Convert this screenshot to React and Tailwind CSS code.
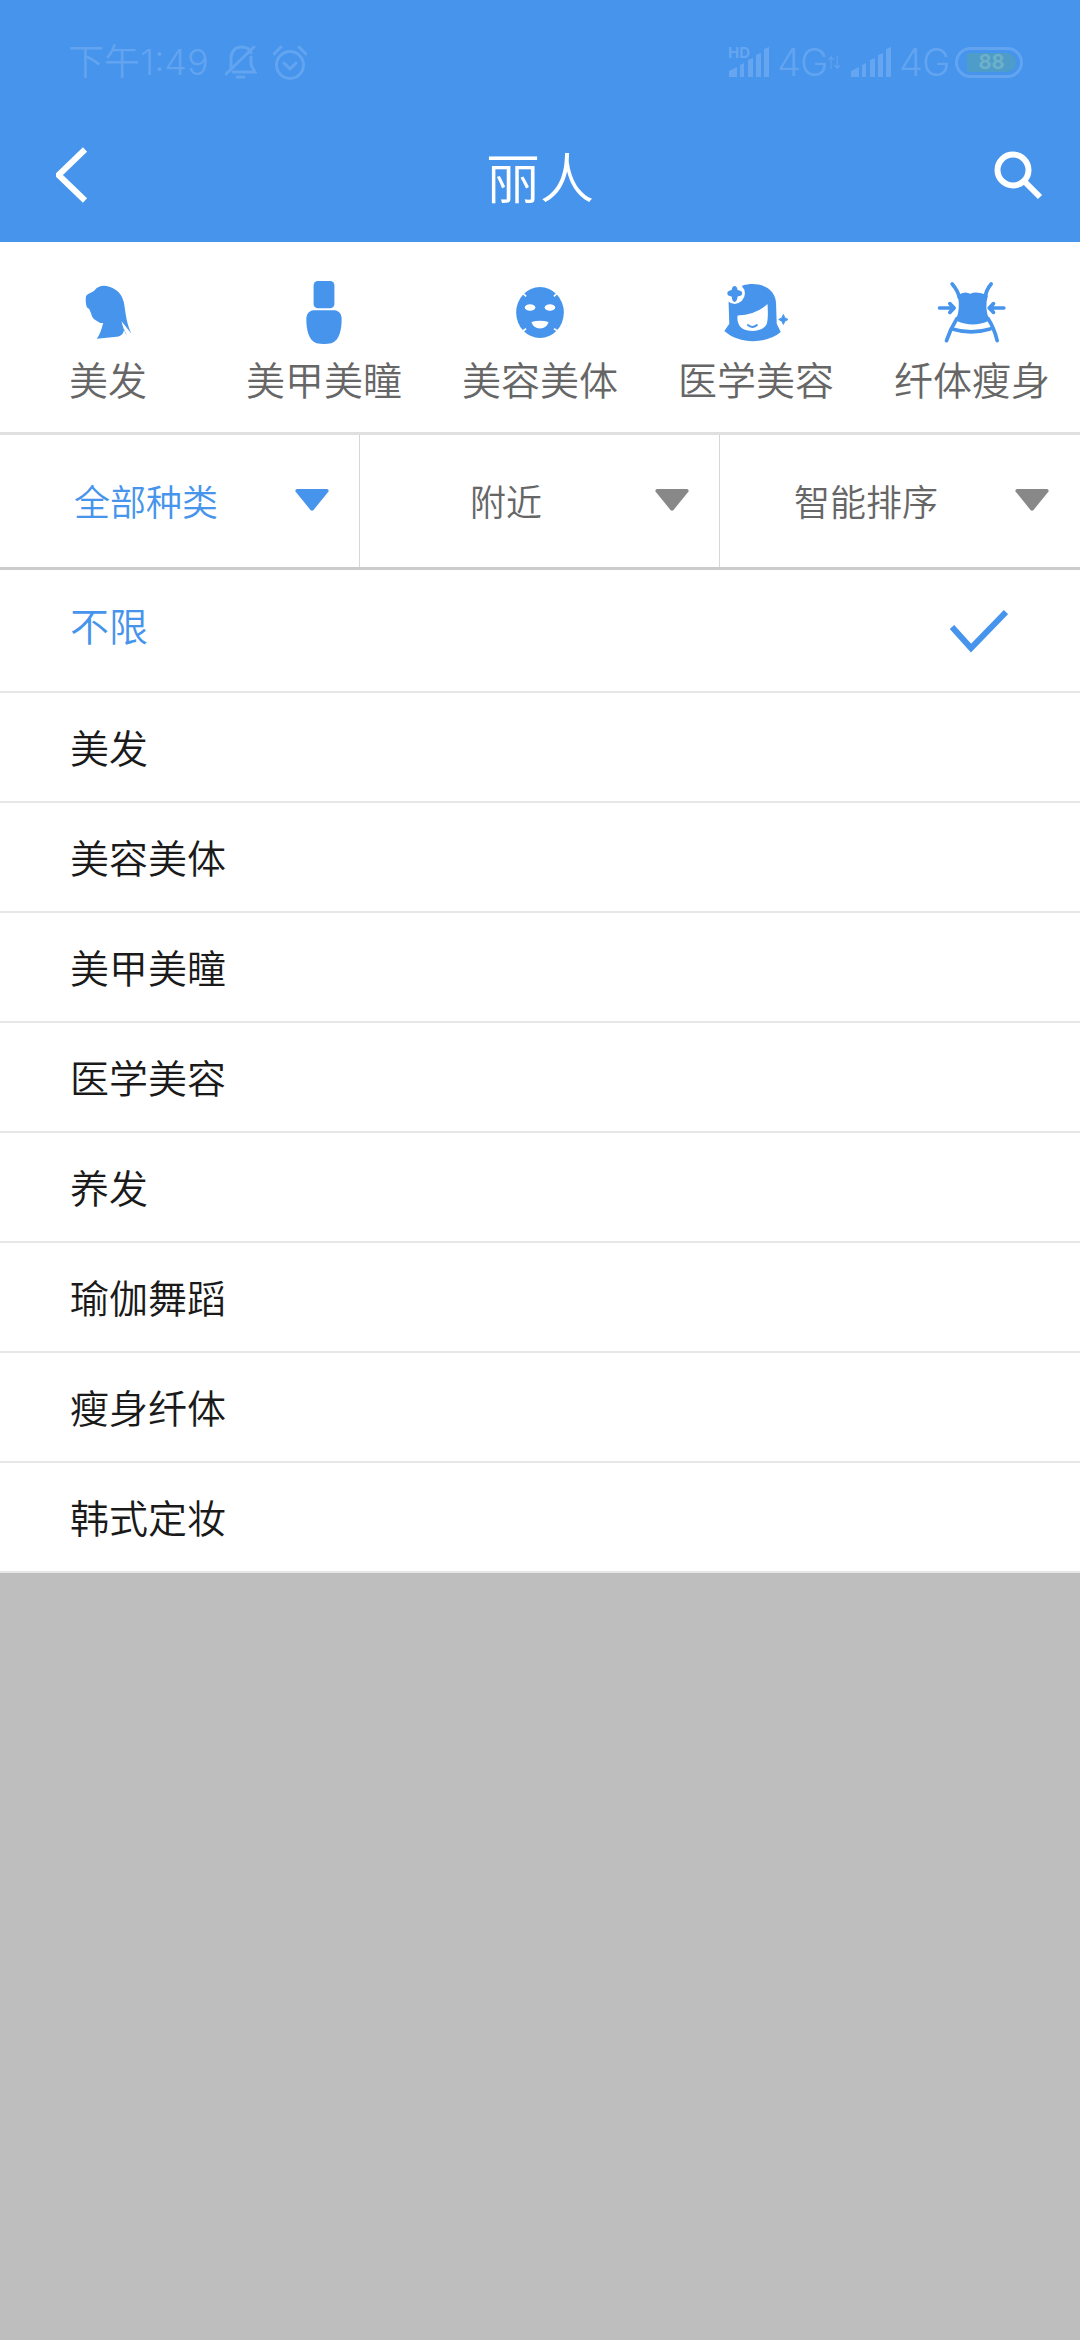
const CATEGORIES = [
  { label: '美发', icon: <HairIcon /> },
  { label: '美甲美瞳', icon: <NailIcon /> },
  { label: '美容美体', icon: <MaskIcon /> },
  { label: '医学美容', icon: <FaceIcon /> },
  { label: '纤体瘦身', icon: <WaistIcon /> },
];

const FILTERS = ['全部种类', '附近', '智能排序'];

const OPTIONS = ['美发', '美容美体', '美甲美瞳', '医学美容', '养发', '瑜伽舞蹈', '瘦身纤体', '韩式定妆'];

function HairIcon() {
  return (
    <svg width="49" height="56" viewBox="70 70 146 168" fill="#4694ec">
      <path d="M75 110C76 100 88 98 100 90C110 76 128 72 145 78C170 86 183 100 189 125C195 160 197 190 212 219L182 182C186 200 192 215 198 226L190 205C188 222 180 228 160 229L108 234C118 222 122 205 127 187L118 187C108 180 100 178 95 170C92 162 88 150 85 145L78 140C75 130 74 120 75 110Z" />
    </svg>
  );
}

function NailIcon() {
  return (
    <svg width="38" height="67" viewBox="735 55 115 200" fill="#4694ec">
      <rect x="761" y="60" width="63" height="82" rx="13" />
      <path d="M760 148H825C838 150 846 160 846 175C846 205 840 240 815 248Q792 253 770 248C745 240 739 205 739 175C739 160 747 150 760 148Z" />
    </svg>
  );
}

function MaskIcon() {
  return (
    <svg width="50" height="53" viewBox="105 75 150 160">
      <ellipse cx="180" cy="155" rx="72" ry="77" fill="#4694ec" />
      <ellipse cx="150" cy="140" rx="16" ry="10" fill="#fff" />
      <ellipse cx="210" cy="140" rx="16" ry="10" fill="#fff" />
      <path d="M154 184Q180 176 206 184Q200 203 180 203Q160 203 154 184Z" fill="#fff" />
      <path d="M124 93L138 106M236 93L222 106M124 214L138 204M236 212L222 204" stroke="#fff" strokeWidth="5" />
    </svg>
  );
}

function FaceIcon() {
  return (
    <svg width="68" height="61" viewBox="525 125 205 182">
      <path d="M617 130C660 130 688 155 688 190L690 250L702 275C660 312 575 312 532 272L547 250L545 190C545 155 575 130 617 130Z" fill="#4694ec" />
      <path d="M572 225Q630 222 662 190C664 210 664 240 660 250C650 278 585 280 575 250C571 240 571 232 572 225Z" fill="#fff" />
      <path d="M603 254Q616 265 630 254" stroke="#4694ec" strokeWidth="6" fill="none" strokeLinecap="round" />
      <circle cx="563" cy="159" r="31" fill="#fff" />
      <path d="M563 136Q570 136 572 148Q586 150 586 158Q586 166 572 168Q570 184 563 184Q556 184 554 168Q541 166 541 158Q541 150 554 148Q556 136 563 136Z" fill="#4694ec" />
      <path d="M710 222Q712 235 724 237Q712 240 710 252Q708 240 696 237Q708 235 710 222Z" fill="#4694ec" stroke="#4694ec" strokeWidth="3" strokeLinejoin="round" />
    </svg>
  );
}

function WaistIcon() {
  return (
    <svg width="72" height="65" viewBox="50 50 215 195" fill="none" stroke="#4694ec" strokeWidth="11" strokeLinecap="round" strokeLinejoin="round">
      <path d="M118 98Q135 84 152 94Q172 84 202 98C196 120 196 145 207 170Q160 192 112 170C122 145 122 120 118 98Z" fill="#4694ec" strokeWidth="5" />
      <path d="M98 62C110 76 117 88 119 102M215 62C203 76 198 88 198 102" />
      <path d="M112 166C98 188 88 210 81 232M206 166C220 188 228 210 233 232" />
      <path d="M98 197Q155 214 212 197" />
      <path d="M60 134H103M91 121L104 134L91 147M253 134H210M222 121L209 134L222 147" />
    </svg>
  );
}

function SignalBars({ hd }) {
  return (
    <div className="relative h-[30px] w-[40px]">
      {hd && <span className="absolute -left-[1px] -top-[2px] text-[15px] leading-none font-bold text-[#66a6f0] font-['Inter',sans-serif]">HD</span>}
      <svg width="40" height="30" viewBox="0 0 40 30" fill="#66a6f0" className="absolute left-0 top-0">
        <path d="M0 30V24L8 20V30ZM11 30V18L15 16V30ZM19 30V13L24 11V30ZM27 30V8L32 6V30ZM35 30V2L40 0V30Z" />
      </svg>
    </div>
  );
}

function StatusBar() {
  return (
    <div className="flex h-[112px] items-center justify-between pl-[68px] pr-[57px] pt-[12px] font-['Inter','Noto_Sans_CJK_SC',sans-serif] text-[#62a4f0]">
      <div className="flex items-center">
        <span className="w-[157px] text-[36px] leading-none">下午1:49</span>
        <svg width="32" height="34" viewBox="0 0 32 34" fill="none" stroke="#62a4f0" strokeWidth="3" strokeLinecap="round">
          <path d="M6 23V13C6 6 11 2 16 2C21 2 25 4 26 8M26 12V20L30 27H8M1 29L29 2M12 32H19" />
        </svg>
        <svg width="34" height="35" viewBox="0 0 34 35" fill="none" stroke="#62a4f0" strokeWidth="3" strokeLinecap="round" strokeLinejoin="round" className="ml-[16px]">
          <circle cx="17" cy="20" r="13.5" />
          <path d="M11 18L17 24L23 18M1 9L8 2M33 9L26 2" />
        </svg>
      </div>
      <div className="flex items-center">
        <SignalBars hd />
        <span className="ml-[8px] w-[48px] text-[38px] leading-none tracking-[-1px]">4G</span>
        <span className="w-[26px] pl-[2px] text-[14px] leading-none text-[#66a6f0]">⇅</span>
        <SignalBars />
        <span className="ml-[8px] w-[48px] text-[38px] leading-none tracking-[-1px]">4G</span>
        <div className="ml-[8px] flex h-[31px] w-[68px] items-center rounded-full border-[3px] border-[#62a4f0] pl-[9px]">
          <div className="flex h-[19px] w-[49px] items-center justify-center rounded-r-full bg-[#4e9cc9] text-[20px] leading-none font-bold text-[#6eb0c8]">
            88
          </div>
        </div>
      </div>
    </div>
  );
}

function NavBar() {
  return (
    <div className="flex h-[130px] items-center justify-between">
      <div className="flex w-[180px] pl-[56px]">
        <svg width="32" height="56" viewBox="0 0 32 56" fill="none" stroke="#fff" strokeWidth="6" className="-mt-[4px]">
          <path d="M29 2.5L2.5 28L29 53.5" />
        </svg>
      </div>
      <span className="-mt-[2px] text-[54px] leading-none font-[350] text-white">丽人</span>
      <div className="flex w-[180px] justify-end pr-[37px]">
        <svg width="50" height="50" viewBox="0 0 50 50" fill="none" stroke="#fff" strokeWidth="6" className="-mt-[5px]">
          <circle cx="20" cy="20" r="15.5" />
          <path d="M31 31L47 47" />
        </svg>
      </div>
    </div>
  );
}

function FilterArrow({ active }) {
  return (
    <svg width="34" height="22" viewBox="0 0 34 22" fill={active ? '#4694ec' : '#888888'} className="ml-[3px] -mt-[2px]">
      <path d="M2 0H32Q34 0 33.5 2.5L18.5 21Q17 22.5 15.5 21L0.5 2.5Q0 0 2 0Z" />
    </svg>
  );
}

export default function App() {
  return (
    <div className="flex min-h-[2340px] w-[1080px] flex-col bg-[#bebebe] font-[350] font-['Noto_Sans_CJK_SC',sans-serif]">
      <header className="h-[242px] bg-[#4694ec]">
        <StatusBar />
        <NavBar />
      </header>

      {/* category shortcuts */}
      <div className="grid h-[193px] grid-cols-5 border-b-[3px] border-[#e0e0e0] bg-white pt-[38px]">
        {CATEGORIES.map((cat) => (
          <div key={cat.label} className="flex flex-col items-center">
            <div className="flex h-[64px] items-center justify-center">{cat.icon}</div>
            <span className="mt-[10px] text-[39px] leading-[48px] text-[#666666]">{cat.label}</span>
          </div>
        ))}
      </div>

      {/* filter tabs */}
      <div className="grid h-[135px] grid-cols-3 border-b-[3px] border-[#cccccc] bg-white">
        {FILTERS.map((name, i) => (
          <div key={name} className={`flex items-center ${i < 2 ? 'border-r border-[#d6d6d6]' : ''}`}>
            <span className={`-mt-[2px] w-[292px] text-center text-[36px] leading-none ${i === 0 ? 'text-[#4694ec]' : 'text-[#666666]'}`}>{name}</span>
            <FilterArrow active={i === 0} />
          </div>
        ))}
      </div>

      {/* dropdown list */}
      <div className="bg-white">
        <div className="flex h-[123px] items-center justify-between border-b-2 border-[#e6e6e6] pl-[70px] pr-[72px]">
          <span className="-mt-[13px] text-[39px] leading-none text-[#4694ec]">不限</span>
          <svg width="58" height="44" viewBox="0 0 58 44" fill="none" stroke="#4694ec" strokeWidth="6">
            <path d="M2 18L21 39L56 3" />
          </svg>
        </div>
        {OPTIONS.map((name) => (
          <div key={name} className="flex h-[110px] items-center border-b-2 border-[#e6e6e6] pl-[70px]">
            <span className="-mt-[2px] text-[39px] leading-none text-[#1a1a1a]">{name}</span>
          </div>
        ))}
      </div>
    </div>
  );
}
